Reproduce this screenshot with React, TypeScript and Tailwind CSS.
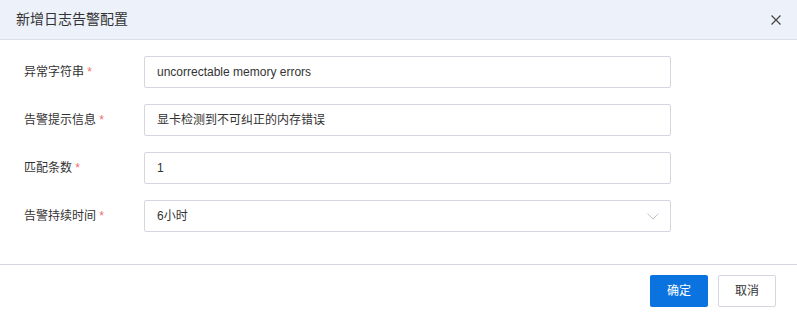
import React from 'react';

const fields = [
  { label: '异常字符串', value: 'uncorrectable memory errors' },
  { label: '告警提示信息', value: '显卡检测到不可纠正的内存错误' },
  { label: '匹配条数', value: '1' },
];

const App: React.FC = () => {
  return (
    <div className="w-[797px] h-[316px] bg-white text-[#333] font-['Liberation_Sans','Noto_Sans_CJK_SC',sans-serif] overflow-hidden">
      <div className="h-[40px] bg-[#edf1f9] border-b border-[#dcdfe8] flex items-center justify-between pl-4 pr-[16px]">
        <span className="text-[14px] text-[#333]">新增日志告警配置</span>
        <svg width="10" height="10" viewBox="0 0 10 10" className="mr-[0px]">
          <path d="M0.5 0.5L9.5 9.5M9.5 0.5L0.5 9.5" stroke="#444" strokeWidth="1.2" />
        </svg>
      </div>

      <div className="pt-[16px] pb-[32px] flex flex-col gap-[16px]">
        {fields.map((f) => (
          <div key={f.label} className="flex items-center h-[32px]">
            <label className="w-[144px] pl-[24px] text-[12px]">
              {f.label} <span className="text-[#f56c6c]">*</span>
            </label>
            <div className="w-[527px] h-[32px] border border-[#d4d7e0] rounded-[2px] flex items-center px-[12px] text-[12px]">
              {f.value}
            </div>
          </div>
        ))}
        <div className="flex items-center h-[32px]">
          <label className="w-[144px] pl-[24px] text-[12px]">
            告警持续时间 <span className="text-[#f56c6c]">*</span>
          </label>
          <div className="w-[527px] h-[32px] border border-[#d4d7e0] rounded-[2px] flex items-center justify-between pl-[12px] pr-[11px] text-[12px]">
            <span>6小时</span>
            <svg width="12" height="7" viewBox="0 0 12 7">
              <path d="M0.5 0.5L6 6L11.5 0.5" fill="none" stroke="#c0c4cc" strokeWidth="1" />
            </svg>
          </div>
        </div>
      </div>

      <div className="border-t border-[#d4d7e0] flex justify-end gap-[10px] pt-[10px] pr-[21px]">
        <button className="w-[58px] h-[32px] bg-[#0a73e0] text-white text-[12px] rounded-[2px]">确定</button>
        <button className="w-[58px] h-[32px] bg-white border border-[#d4d7e0] text-[#333] text-[12px] rounded-[2px]">取消</button>
      </div>
    </div>
  );
};

export default App;
